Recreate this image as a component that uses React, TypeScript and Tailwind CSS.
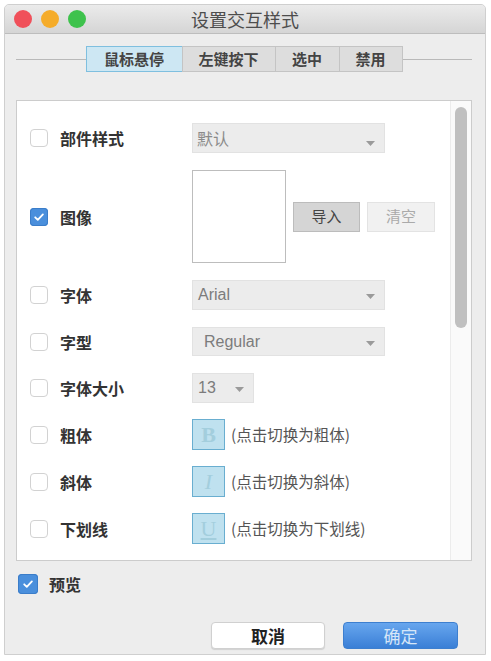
import type { ReactNode } from "react"

const FONT = { fontFamily: '"Noto Sans CJK SC", "Noto Sans", sans-serif' }

function Caret() {
  return (
    <svg width="9" height="5" viewBox="0 0 9 5" className="mt-[3px]">
      <path d="M0 0h9L4.5 5z" fill="#9a9a9a" />
    </svg>
  )
}

function CheckBox({ checked, size = 18 }: { checked?: boolean; size?: number }) {
  const dims = size === 18 ? "h-[18px] w-[18px]" : "h-[20px] w-[20px]"
  if (checked) {
    return (
      <span className={`${dims} flex shrink-0 items-center justify-center rounded-[4px] bg-[#4a8fdc] shadow-[inset_0_0_0_1px_#3b7dc9]`}>
        <svg width="12" height="12" viewBox="0 0 12 12">
          <path d="M2.2 6.3l2.6 2.6L9.9 3.4" fill="none" stroke="#fff" strokeWidth="1.8" strokeLinecap="round" strokeLinejoin="round" />
        </svg>
      </span>
    )
  }
  return <span className={`${dims} shrink-0 rounded-[4px] border border-[#d2d2d2] bg-white`} />
}

function Select({ value, width, padLeft = "pl-[5px]" }: { value: string; width: string; padLeft?: string }) {
  return (
    <div className={`${width} flex h-full items-center justify-between border border-[#e2e2e2] bg-[#ececec] ${padLeft} pr-[9px]`}>
      <span className="text-[16px] leading-none text-[#7c7c7c]" style={{ fontFamily: '"Liberation Sans", "Noto Sans CJK SC", sans-serif' }}>
        {value}
      </span>
      <Caret />
    </div>
  )
}

function Row({ label, checked, height, mt, children }: { label: string; checked?: boolean; height: string; mt: string; children: ReactNode }) {
  return (
    <div className={`flex ${height} ${mt} items-center`}>
      <div className="flex w-[162px] shrink-0 items-center gap-[12px]">
        <CheckBox checked={checked} />
        <span className="text-[16px] font-bold text-[#333]">{label}</span>
      </div>
      <div className="flex h-full items-center">{children}</div>
    </div>
  )
}

function Toggle({ letter, hint, cls }: { letter: string; hint: string; cls: string }) {
  return (
    <>
      <div className="flex h-full w-[33px] items-center justify-center border border-[#69aed0] bg-[#bfe1ef]">
        <span className={`text-[22px] leading-none text-[#a3cedd] ${cls}`} style={{ fontFamily: '"Liberation Serif", serif' }}>
          {letter}
        </span>
      </div>
      <span className="ml-[6px] text-[15.5px] text-[#555]">{hint}</span>
    </>
  )
}

const TABS = [
  { label: "鼠标悬停", w: "w-[97px]", active: true },
  { label: "左键按下", w: "w-[94px]" },
  { label: "选中", w: "w-[65px]" },
  { label: "禁用", w: "w-[64px]" },
]

export default function App() {
  return (
    <div className="h-[661px] w-[491px] bg-white pl-[4px] pt-[4px]" style={FONT}>
      <div className="flex h-[651px] w-[482px] flex-col overflow-hidden rounded-t-[5px] border border-[#cfcfcf] bg-[#ededed]">
        <div className="relative flex h-[29px] shrink-0 items-center justify-center border-b border-[#bdbdbd] bg-gradient-to-b from-[#ebebeb] to-[#d5d5d5]">
          <div className="absolute left-[9px] top-[5px] flex gap-[9px]">
            <span className="h-[18px] w-[18px] rounded-full bg-[#f0505a]" />
            <span className="h-[18px] w-[18px] rounded-full bg-[#f5ac2a]" />
            <span className="h-[18px] w-[18px] rounded-full bg-[#3ec24c]" />
          </div>
          <span className="text-[18px] text-[#4d4d4d]">设置交互样式</span>
        </div>

        <div className="mt-[12px] flex items-center pl-[11px] pr-[13px]">
          <div className="h-px flex-1 bg-[#b9b9b9]" />
          <div className="flex h-[26px]">
            {TABS.map((tab) => (
              <div
                key={tab.label}
                className={`${tab.w} flex items-center justify-center border text-[15px] font-bold text-[#444] ${
                  tab.active ? "border-[#7fbfdf] bg-[#cde7f3]" : "-ml-px border-[#c4c4c4] bg-[#dddddd]"
                }`}
              >
                {tab.label}
              </div>
            ))}
          </div>
          <div className="h-px flex-1 bg-[#b9b9b9]" />
        </div>

        <div className="ml-[11px] mt-[28px] flex h-[461px] w-[456px] border border-[#cccccc] bg-white">
          <div className="flex-1 pl-[13px] pt-[22px]">
            <Row label="部件样式" height="h-[30px]" mt="mt-0">
              <div className="flex h-full w-[193px] items-start justify-between border border-[#e2e2e2] bg-[#ececec] pl-[4px] pr-[9px] pt-[2px]">
                <span className="text-[16px] text-[#8a8a8a]">默认</span>
                <span className="mt-[12px]">
                  <Caret />
                </span>
              </div>
            </Row>
            <Row label="图像" checked height="h-[93px]" mt="mt-[17px]">
              <div className="h-full w-[94px] border border-[#bdbdbd] bg-white" />
              <div className="ml-[7px] flex h-[30px] w-[67px] items-center justify-center border border-[#bcbcbc] bg-[#d5d5d5] text-[15px] text-[#444]">
                导入
              </div>
              <div className="ml-[7px] flex h-[30px] w-[68px] items-center justify-center border border-[#e3e3e3] bg-[#f1f1f1] text-[15px] text-[#aaa]">
                清空
              </div>
            </Row>
            <Row label="字体" height="h-[30px]" mt="mt-[17px]">
              <Select value="Arial" width="w-[193px]" />
            </Row>
            <Row label="字型" height="h-[29px]" mt="mt-[17px]">
              <Select value="Regular" width="w-[193px]" padLeft="pl-[11px]" />
            </Row>
            <Row label="字体大小" height="h-[30px]" mt="mt-[17px]">
              <Select value="13" width="w-[62px]" />
            </Row>
            <Row label="粗体" height="h-[31px]" mt="mt-[16px]">
              <Toggle letter="B" hint="(点击切换为粗体)" cls="font-bold" />
            </Row>
            <Row label="斜体" height="h-[31px]" mt="mt-[16px]">
              <Toggle letter="I" hint="(点击切换为斜体)" cls="italic" />
            </Row>
            <Row label="下划线" height="h-[31px]" mt="mt-[16px]">
              <Toggle letter="U" hint="(点击切换为下划线)" cls="underline" />
            </Row>
          </div>
          <div className="w-[21px] shrink-0 border-l border-[#ececec] bg-[#fafafa] pt-[6px]">
            <div className="mx-auto h-[221px] w-[12px] rounded-full bg-[#c0c0c0]" />
          </div>
        </div>

        <div className="ml-[13px] mt-[11px] flex items-center gap-[11px]">
          <CheckBox checked size={20} />
          <span className="text-[16px] font-bold text-[#333]">预览</span>
        </div>

        <div className="mt-[26px] flex justify-end gap-[18px] pr-[27px]">
          <div className="flex h-[27px] w-[114px] items-center justify-center rounded-[4px] border border-[#d0d0d0] bg-white text-[17px] font-bold text-[#222] shadow-[0_1px_1px_rgba(0,0,0,0.12)]">
            取消
          </div>
          <div className="flex h-[27px] w-[115px] items-center justify-center rounded-[4px] border border-[#3d7fcf] bg-gradient-to-b from-[#67a6ee] to-[#3a7fd6] text-[17px] text-[#d6e6f8]">
            确定
          </div>
        </div>
      </div>
    </div>
  )
}
